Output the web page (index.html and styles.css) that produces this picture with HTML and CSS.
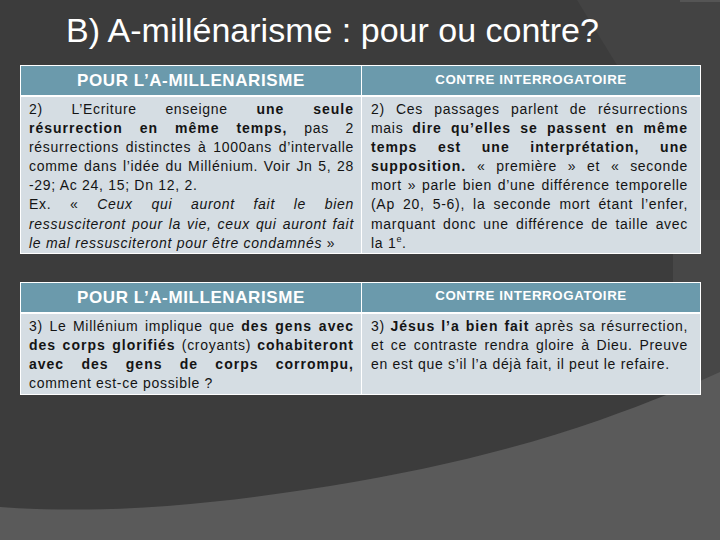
FILE: index.html
```html
<!DOCTYPE html>
<html lang="fr">
<head>
<meta charset="utf-8">
<title>A-millénarisme</title>
<link rel="stylesheet" href="styles.css">
</head>
<body>
<svg class="backdrop" width="720" height="540" viewBox="0 0 720 540" aria-hidden="true">
  <polygon points="577,0 720,0 720,233" fill="#434343"/>
  <rect x="680" y="0" width="40" height="2" fill="#555555"/>
  <rect x="673" y="200" width="47" height="340" fill="#474747"/>
  <path d="M0,507 C120,516 240,500 330,486 C430,470 520,448 600,420 C650,402 690,386 720,372 L720,540 L0,540 Z" fill="#5a5a5a"/>
</svg>
<main class="slide">
  <h1 class="title">B) A-millénarisme : pour ou contre?</h1>

  <table class="debate first">
    <thead>
      <tr>
        <th class="pro">POUR L’A-MILLENARISME</th>
        <th class="contra">CONTRE INTERROGATOIRE</th>
      </tr>
    </thead>
    <tbody>
      <tr>
        <td class="left">
          <p>2) L’Ecriture enseigne <b>une seule résurrection en même temps,</b> pas 2 résurrections distinctes à 1000ans d’intervalle comme dans l’idée du Millénium. Voir Jn 5, 28 -29; Ac 24, 15; Dn 12, 2.</p>
          <p>Ex. « <i>Ceux qui auront fait le bien ressusciteront pour la vie, ceux qui auront fait le mal ressusciteront pour être condamnés</i> »</p>
        </td>
        <td class="right">
          <p>2) Ces passages parlent de résurrections mais <b>dire qu’elles se passent en même temps est une interprétation, une supposition.</b> «&nbsp;première&nbsp;» et «&nbsp;seconde mort&nbsp;» parle bien d’une différence temporelle (Ap 20, 5-6), la seconde mort étant l’enfer, marquant donc une différence de taille avec la 1<sup>e</sup>.</p>
        </td>
      </tr>
    </tbody>
  </table>

  <table class="debate second">
    <thead>
      <tr>
        <th class="pro">POUR L’A-MILLENARISME</th>
        <th class="contra">CONTRE INTERROGATOIRE</th>
      </tr>
    </thead>
    <tbody>
      <tr>
        <td class="left">
          <p>3) Le Millénium implique que <b>des gens avec des corps glorifiés</b> (croyants) <b>cohabiteront avec des gens de corps corrompu,</b> comment est-ce possible ?</p>
        </td>
        <td class="right">
          <p>3) <b>Jésus l’a bien fait</b> après sa résurrection, et ce contraste rendra gloire à Dieu. Preuve en est que s’il l’a déjà fait, il peut le refaire.</p>
        </td>
      </tr>
    </tbody>
  </table>
</main>
</body>
</html>
```
FILE: styles.css
```css
html, body {
  margin: 0;
  padding: 0;
}
body {
  width: 720px;
  height: 540px;
  overflow: hidden;
  background: #3c3c3c;
  font-family: "Liberation Sans", Arial, sans-serif;
  position: relative;
}
.backdrop {
  position: absolute;
  left: 0;
  top: 0;
  z-index: 0;
}
.slide {
  position: relative;
  z-index: 1;
  padding: 0 20px;
}
.title {
  margin: 0;
  padding: 12px 0 0 46px;
  height: 53px;
  box-sizing: border-box;
  font-family: "Liberation Sans Narrow", "Arial Narrow", "Liberation Sans", sans-serif;
  font-weight: normal;
  font-size: 34px;
  line-height: 36px;
  color: #ffffff;
  white-space: nowrap;
}
.debate {
  width: 681px;
  border-collapse: collapse;
  table-layout: fixed;
  margin-top: 12px;
}
.debate.second {
  margin-top: 28px;
}
.debate th {
  background: #6b9aac;
  color: #ffffff;
  font-weight: bold;
  height: 26px;
  padding: 0;
  border: 1px solid #ffffff;
  border-bottom: 2px solid #ffffff;
  text-align: center;
  vertical-align: middle;
}
.debate th.pro {
  width: 340px;
  font-size: 17px;
  letter-spacing: 0.6px;
  padding-top: 1px;
}
.debate th.contra {
  font-size: 13.3px;
  letter-spacing: 0.6px;
  padding-bottom: 3px;
}
.debate td {
  background: #d5dde3;
  border: 1px solid #ffffff;
  vertical-align: top;
  padding: 3px 7px 0 8px;
  color: #141414;
  font-size: 14px;
  letter-spacing: 0.7px;
  line-height: 19.1px;
  text-align: justify;
}
.debate td.right {
  padding-right: 12px;
  padding-left: 9px;
}
.debate.first td {
  height: 150px;
}
.debate.second td {
  height: 77px;
}
.debate p {
  margin: 0;
}
.debate b {
  letter-spacing: 1px;
}
.debate sup {
  font-size: 9px;
  line-height: 0;
}
```
